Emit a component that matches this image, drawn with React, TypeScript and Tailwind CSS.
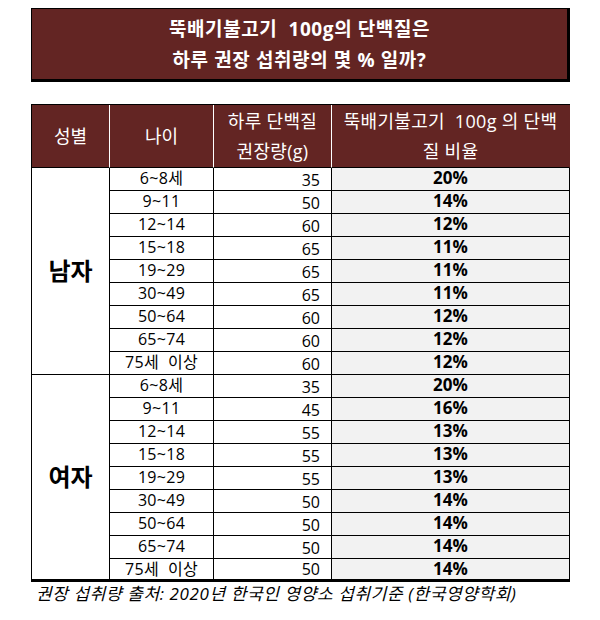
import React from "react";

const male = [
  ["6~8세", "35", "20%"],
  ["9~11", "50", "14%"],
  ["12~14", "60", "12%"],
  ["15~18", "65", "11%"],
  ["19~29", "65", "11%"],
  ["30~49", "65", "11%"],
  ["50~64", "60", "12%"],
  ["65~74", "60", "12%"],
  ["75세 이상", "60", "12%"],
];
const female = [
  ["6~8세", "35", "20%"],
  ["9~11", "45", "16%"],
  ["12~14", "55", "13%"],
  ["15~18", "55", "13%"],
  ["19~29", "55", "13%"],
  ["30~49", "50", "14%"],
  ["50~64", "50", "14%"],
  ["65~74", "50", "14%"],
  ["75세 이상", "50", "14%"],
];

function Rows({ data, last }: { data: string[][]; last: boolean }) {
  return (
    <>
      {data.map((r, i) => {
        const isLast = last && i === data.length - 1;
        const bb = isLast ? "border-b-[3px]" : "border-b";
        return (
          <React.Fragment key={i}>
            <div className={`col-start-2 border-r ${bb} border-black flex items-start justify-center text-[16px] leading-[20px] tracking-[0.3px] whitespace-pre text-black`}>
              {r[0].replace(" ", "  ")}
            </div>
            <div className={`col-start-3 border-r ${bb} border-black flex items-end justify-end pr-[11px] text-[16px] leading-[20px] text-black`}>
              {r[1]}
            </div>
            <div className={`col-start-4 border-r ${bb} border-black bg-[#f2f2f2] flex items-start justify-center font-bold text-[17px] leading-[20px] text-black`}>
              {r[2]}
            </div>
          </React.Fragment>
        );
      })}
    </>
  );
}

export default function App() {
  return (
    <div
      className="w-[600px] h-[620px] bg-white overflow-hidden"
      style={{ fontFamily: '"Open Sans", "Noto Sans CJK KR", sans-serif' }}
    >
      <div className="ml-[31px] mt-[8px] w-[539px] h-[74px] bg-[#632523] border-t border-l border-r-[3px] border-b-[3px] border-black flex flex-col items-center justify-center pt-[2px] text-white font-bold text-[19px] leading-[31px] tracking-[0.6px] whitespace-pre">
        <div>뚝배기불고기  100g의 단백질은</div>
        <div>하루 권장 섭취량의 몇 % 일까?</div>
      </div>

      <div className="ml-[31px] mt-[22px] w-[539px] border-l border-t border-black grid grid-cols-[78px_104px_118px_238px] grid-rows-[63px_repeat(18,23px)]">
        <div className="bg-[#632523] border-r border-r-white border-b border-b-black flex items-center justify-center text-white text-[18px]">
          성별
        </div>
        <div className="bg-[#632523] border-r border-r-white border-b border-b-black flex items-center justify-center text-white text-[18px]">
          나이
        </div>
        <div className="bg-[#632523] border-r border-r-white border-b border-b-black flex flex-col items-center justify-center text-white text-[18px] leading-[30px] tracking-[0.3px]">
          <div>하루 단백질</div>
          <div>권장량(g)</div>
        </div>
        <div className="bg-[#632523] border-r border-r-[#632523] border-b border-b-black flex flex-col items-center justify-center text-white text-[18px] leading-[30px] tracking-[0.3px] whitespace-pre">
          <div>뚝배기불고기  100g 의 단백</div>
          <div>질 비율</div>
        </div>

        <div className="col-start-1 row-start-2 row-span-9 border-r border-b border-black flex items-center justify-center font-bold text-[24px] text-black">
          남자
        </div>
        <Rows data={male} last={false} />
        <div className="col-start-1 row-start-11 row-span-9 border-r border-b-[3px] border-black flex items-center justify-center font-bold text-[24px] text-black">
          여자
        </div>
        <Rows data={female} last={true} />
      </div>

      <div className="ml-[36px] mt-[1px] italic text-[17px] leading-[22px] tracking-[0.6px] text-black">
        권장 섭취량 출처: 2020년 한국인 영양소 섭취기준 (한국영양학회)
      </div>
    </div>
  );
}
